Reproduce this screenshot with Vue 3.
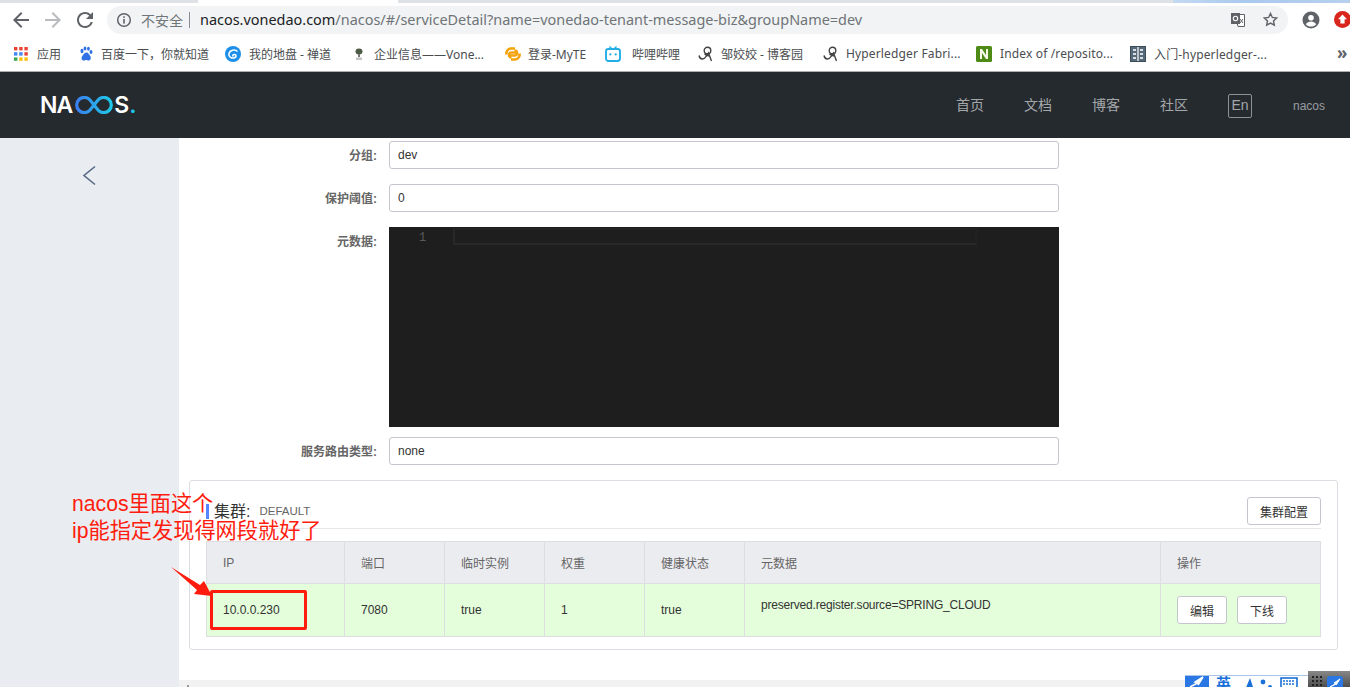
<template>
  <div class="page">
    <!-- browser chrome -->
    <div class="tabstrip">
      <div class="tab-off first"></div>
      <div class="tab-on"></div>
      <div class="tab-off rest"></div>
      <div class="tab-blue"></div>
    </div>
    <div class="toolbar">
      <svg class="nav-ico" viewBox="0 0 24 24" fill="#5f6368"><path d="M20 11H7.83l5.59-5.59L12 4l-8 8 8 8 1.41-1.41L7.83 13H20v-2z" /></svg>
      <svg class="nav-ico" viewBox="0 0 24 24" fill="#b8babd"><path d="M4 11h12.17l-5.59-5.59L12 4l8 8-8 8-1.41-1.41L16.17 13H4v-2z" /></svg>
      <svg class="nav-ico" viewBox="0 0 24 24" fill="#5f6368"><path d="M17.65 6.35A7.958 7.958 0 0 0 12 4c-4.42 0-7.99 3.58-7.99 8s3.57 8 7.99 8c3.73 0 6.84-2.55 7.73-6h-2.08A5.99 5.99 0 0 1 12 18c-3.31 0-6-2.69-6-6s2.69-6 6-6c1.66 0 3.14.69 4.22 1.78L13 11h7V4l-2.35 2.35z" /></svg>
      <div class="omnibox">
        <svg class="info" viewBox="0 0 16 16">
          <circle cx="8" cy="8" r="6.3" fill="none" stroke="#5f6368" stroke-width="1.5" />
          <rect x="7.2" y="7" width="1.6" height="4.6" fill="#5f6368" />
          <rect x="7.2" y="4.3" width="1.6" height="1.6" fill="#5f6368" />
        </svg>
        <span class="insecure">不安全</span>
        <span class="sep"></span>
        <span class="url"><b>nacos.vonedao.com</b>/nacos/#/serviceDetail?name=vonedao-tenant-message-biz&amp;groupName=dev</span>
        <svg class="translate" viewBox="0 0 16 16">
          <path d="M5 2.5h9.5v12H8z" fill="#fff" stroke="#5f6368" stroke-width="1" />
          <rect x="1" y="1" width="9" height="11" fill="#5f6368" />
          <circle cx="5.5" cy="6.5" r="2.2" fill="none" stroke="#fff" stroke-width="1.1" />
          <path d="M10 7l3 4M13 7l-3 4" stroke="#5f6368" stroke-width="1" />
        </svg>
        <svg class="star" viewBox="0 0 24 24" fill="none" stroke="#5f6368" stroke-width="2"><path d="M12 3.5l2.6 5.6 6.1.7-4.5 4.2 1.2 6-5.4-3-5.4 3 1.2-6-4.5-4.2 6.1-.7z" /></svg>
      </div>
      <svg class="profile" viewBox="0 0 18 18">
        <circle cx="9" cy="9" r="8.5" fill="#5f6368" />
        <circle cx="9" cy="6.8" r="2.8" fill="#fff" />
        <path d="M3.8 13.2c1.2-2 3.2-2.8 5.2-2.8s4 .8 5.2 2.8c-1.2 1.5-3.1 2.4-5.2 2.4s-4-.9-5.2-2.4z" fill="#fff" />
      </svg>
      <svg class="ext" viewBox="0 0 17 17">
        <circle cx="8.5" cy="8.5" r="8.5" fill="#d9261c" />
        <path d="M8.5 3.5l4.5 4.8h-2.4v4.2H6.4V8.3H4z" fill="#fff" />
      </svg>
    </div>
    <div class="bookmarks">
      <div v-for="b in bookmarks" :key="b.text" class="bm" :class="{ latin: b.latin }" :style="{ width: b.w + 'px' }">
        <svg v-if="b.icon === 'apps'" class="bm-ico apps" viewBox="0 0 14 14">
          <rect v-for="c in appCells" :key="c.x + '-' + c.y" :x="c.x" :y="c.y" width="3.4" height="3.4" :fill="c.fill" />
        </svg>
        <svg v-else-if="b.icon === 'paw'" class="bm-ico tight" viewBox="0 0 16 16" fill="#3072e6">
          <ellipse cx="4" cy="5" rx="1.5" ry="2.2" />
          <ellipse cx="7" cy="2.6" rx="1.4" ry="2" />
          <ellipse cx="10.4" cy="2.8" rx="1.4" ry="2" />
          <ellipse cx="13" cy="6" rx="1.5" ry="2" />
          <path d="M8.5 6.5c2 0 2.5 2 3.6 3.2 1.2 1.4.9 4.8-1.6 4.8-1 0-1.3-.5-2.2-.5s-1.4.5-2.4.5c-2.5 0-2.9-3-1.6-4.6 1.2-1.3 2-3.4 4.2-3.4z" />
        </svg>
        <svg v-else-if="b.icon === 'swirl'" class="bm-ico" viewBox="0 0 16 16">
          <circle cx="8" cy="8" r="8" fill="#1d8fe8" />
          <path d="M12.5 5.5C10 3 5 3.8 4 7.5c-.8 3.3 3 5.6 6 4 1.5-.8 1.4-2.8-.3-3-1.6-.2-2.5 1-1.5 2" fill="none" stroke="#fff" stroke-width="1.5" />
        </svg>
        <svg v-else-if="b.icon === 'plant'" class="bm-ico small" viewBox="0 0 14 16">
          <ellipse cx="7" cy="5.5" rx="3.5" ry="3" fill="#4d5a45" />
          <rect x="6" y="8" width="2" height="3" fill="#777" />
          <rect x="4" y="11.5" width="6" height="2.5" fill="#c4c4c4" />
        </svg>
        <svg v-else-if="b.icon === 'link'" class="bm-ico wide" viewBox="0 0 18 16" fill="none" stroke="#f5a30c" stroke-width="2.6">
          <path d="M12.5 6.5H7.5a2.5 2.5 0 0 0 0 5M11 2.5H6.5a5 5 0 0 0-4 6" />
          <path d="M5.5 9.5h5a2.5 2.5 0 0 0 0-5M7 13.5h4.5a5 5 0 0 0 4-6" />
        </svg>
        <svg v-else-if="b.icon === 'tv'" class="bm-ico roomy" viewBox="0 0 16 16">
          <path d="M4.5 0.5l2.5 2.5M11.5 0.5L9 3" stroke="#23ade5" stroke-width="1.4" />
          <rect x="1" y="3" width="14" height="12" rx="2.4" fill="none" stroke="#23ade5" stroke-width="1.9" />
          <circle cx="5.3" cy="8.4" r="1.1" fill="#23ade5" />
          <circle cx="10.7" cy="8.4" r="1.1" fill="#23ade5" />
        </svg>
        <svg v-else-if="b.icon === 'blog'" class="bm-ico tight" viewBox="0 0 16 16" fill="none" stroke="#444" stroke-width="1.4">
          <circle cx="9.5" cy="4.5" r="3.3" />
          <path d="M1 9.5c1 4.5 5 4.5 7 1l2.5-3.5 3 8M6.5 8l4.5 2" />
        </svg>
        <svg v-else-if="b.icon === 'nexus'" class="bm-ico" viewBox="0 0 16 16">
          <rect width="16" height="16" rx="1.5" fill="#4d8a16" />
          <path d="M4 13V3h2l4 6V3h2v10h-2L6 7v6z" fill="#f2f7e8" />
        </svg>
        <svg v-else-if="b.icon === 'book'" class="bm-ico" viewBox="0 0 16 16">
          <rect x="0.5" y="0.5" width="15" height="15" fill="#566a7a" stroke="#3e4c57" />
          <rect x="7.4" y="1" width="1.2" height="14" fill="#fff" />
          <rect x="3" y="3" width="3" height="2" fill="#d8dee3" />
          <rect x="3" y="7" width="3" height="2" fill="#d8dee3" />
          <rect x="3" y="11" width="3" height="2" fill="#d8dee3" />
          <rect x="10" y="3" width="3" height="2" fill="#d8dee3" />
          <rect x="10" y="7" width="3" height="2" fill="#d8dee3" />
          <rect x="10" y="11" width="3" height="2" fill="#d8dee3" />
        </svg>
        <span class="bm-text">{{ b.text }}</span>
      </div>
      <span class="bm-more">»</span>
    </div>

    <!-- nacos header -->
    <header class="topbar">
      <div class="logo">
        <span>NA</span>
        <svg class="logo-loop" width="40" height="18" viewBox="0 0 40 18" fill="none" stroke-width="3.2">
          <defs>
            <linearGradient id="loop" x1="0" x2="1" y1="0" y2="0">
              <stop offset="0" stop-color="#3a80f0" />
              <stop offset="1" stop-color="#1fc8e8" />
            </linearGradient>
          </defs>
          <path d="M16 4A7.6 7.6 0 1 0 16 14L24 4A7.6 7.6 0 1 1 24 14z" stroke="url(#loop)" />
        </svg>
        <span>S</span>
        <span class="logo-dot">.</span>
      </div>
      <nav class="topnav">
        <a v-for="n in navItems" :key="n">{{ n }}</a>
        <span class="lang">En</span>
        <span class="user">nacos</span>
      </nav>
    </header>

    <div class="body">
      <aside class="side">
        <svg class="back" width="16" height="21" viewBox="0 0 16 21" fill="none" stroke="#566a85" stroke-width="1.6"><path d="M14 1.5L3 10.5l11 9" /></svg>
      </aside>
      <main class="main">
        <div class="content">
          <div class="form-row gap15">
            <label>分组:</label>
            <div class="input">dev</div>
          </div>
          <div class="form-row gap15">
            <label>保护阈值:</label>
            <div class="input">0</div>
          </div>
          <div class="form-row gap10">
            <label class="top">元数据:</label>
            <div class="editor">
              <span class="lineno">1</span>
              <div class="curline"></div>
            </div>
          </div>
          <div class="form-row">
            <label>服务路由类型:</label>
            <div class="input">none</div>
          </div>

          <section class="card">
            <div class="card-head">
              <div class="card-title"><i class="bar"></i><span class="t1">集群:</span><span class="t2">DEFAULT</span></div>
              <button class="btn wide-btn">集群配置</button>
            </div>
            <table class="tbl">
              <colgroup>
                <col v-for="(w, i) in colWidths" :key="i" :style="{ width: w + 'px' }" />
              </colgroup>
              <thead>
                <tr><th v-for="h in headers" :key="h">{{ h }}</th></tr>
              </thead>
              <tbody>
                <tr>
                  <td>10.0.0.230</td>
                  <td>7080</td>
                  <td>true</td>
                  <td>1</td>
                  <td>true</td>
                  <td class="meta">preserved.register.source=SPRING_CLOUD</td>
                  <td><div class="ops"><button class="btn">编辑</button><button class="btn">下线</button></div></td>
                </tr>
              </tbody>
            </table>
          </section>
        </div>
        <div class="foot"><i class="foot-mark"></i></div>
      </main>
    </div>

    <!-- red annotation drawn on the screenshot -->
    <div class="note">nacos里面这个<br />ip能指定发现得网段就好了</div>
    <div class="redbox"></div>
    <svg class="arrow" width="50" height="36" viewBox="0 0 50 36">
      <polygon points="1,1 30,19 34,15 42,30 24,28 27,24" fill="#ff1c0e" />
    </svg>

    <!-- IME bar at the bottom edge -->
    <div class="ime">
      <div class="ime-logo">
        <svg width="24" height="12" viewBox="0 0 24 12"><path d="M5 11l8-4-3-1 8-5-5 8 1-3z" fill="#fff" stroke="#fff" stroke-width="1.5" /></svg>
      </div>
      <span class="ime-en">英</span>
      <svg class="ime-moon" width="34" height="12" viewBox="0 0 34 12" fill="#1a6fd8">
        <path d="M6 0l4 12H1z" />
        <circle cx="19" cy="4" r="2.4" />
        <circle cx="26" cy="9" r="2" />
      </svg>
      <svg class="ime-kbd" width="18" height="12" viewBox="0 0 18 12">
        <rect x="1" y="1" width="16" height="12" fill="none" stroke="#1a6fd8" stroke-width="1.6" />
        <path d="M3 4h12M3 7h12" stroke="#1a6fd8" stroke-width="1.6" stroke-dasharray="2 1" />
      </svg>
      <div class="ime-dark">
        <svg width="12" height="12" viewBox="0 0 12 12" fill="#222">
          <rect v-for="c in imeDots" :key="c.x + '-' + c.y" :x="c.x" :y="c.y" width="2" height="2" />
        </svg>
        <div class="ime-mini">
          <svg width="14" height="10" viewBox="0 0 14 10"><path d="M2 9l6-3-2-1 6-4-4 6 1-2z" fill="#fff" stroke="#fff" /></svg>
        </div>
      </div>
    </div>
  </div>
</template>

<script setup>
const bookmarks = [
  { icon: 'apps', text: '应用', w: 64 },
  { icon: 'paw', text: '百度一下，你就知道', w: 147 },
  { icon: 'swirl', text: '我的地盘 - 禅道', w: 127 },
  { icon: 'plant', text: '企业信息——Vone...', w: 152 },
  { icon: 'link', text: '登录-MyTE', w: 101 },
  { icon: 'tv', text: '哔哩哔哩', w: 93 },
  { icon: 'blog', text: '邹姣姣 - 博客园', w: 125 },
  { icon: 'blog', text: 'Hyperledger Fabri...', w: 153, latin: true },
  { icon: 'nexus', text: 'Index of /reposito...', w: 154, latin: true },
  { icon: 'book', text: '入门-hyperledger-...', w: 154, latin: true }
]

const appColors = ['#ea4335', '#ea4335', '#ea4335', '#4285f4', '#4285f4', '#ea4335', '#34a853', '#fbbc05', '#fbbc05']
const appCells = appColors.map((fill, i) => ({ x: (i % 3) * 5.2, y: Math.floor(i / 3) * 5.2, fill }))

const imeDots = []
for (let y = 0; y < 3; y++) {
  for (let x = 0; x < 3; x++) imeDots.push({ x: x * 4, y: y * 4 })
}

const navItems = ['首页', '文档', '博客', '社区']
const headers = ['IP', '端口', '临时实例', '权重', '健康状态', '元数据', '操作']
const colWidths = [138, 100, 100, 100, 100, 416, 160]
</script>

<style>
html, body {
  margin: 0;
  overflow: hidden;
}
</style>

<style scoped>
.page {
  position: relative;
  width: 1350px;
  height: 687px;
  overflow: hidden;
  display: flex;
  flex-direction: column;
  background: #fff;
  color: #333;
  font-family: "Liberation Sans", "Noto Sans CJK SC", sans-serif;
  font-size: 12px;
}

.tabstrip {
  display: flex;
  height: 3px;
  flex: none;
}
.tab-off { background: #dee1e6; }
.tab-off.first { width: 198px; }
.tab-on { width: 200px; background: #fff; }
.tab-off.rest { width: 775px; }
.tab-blue { flex: 1; background: linear-gradient(90deg, #c3d9f2, #a9c9ee 40%, #b7d0ee); }

.toolbar {
  display: flex;
  align-items: center;
  height: 33px;
  flex: none;
  padding-left: 9px;
  background: #fff;
}
.nav-ico {
  width: 24px;
  height: 24px;
  margin-right: 8px;
  flex: none;
}
.omnibox {
  display: flex;
  align-items: center;
  flex: none;
  width: 1181px;
  height: 28px;
  margin-left: 2px;
  border-radius: 14px;
  background: #f1f3f4;
  font-family: "Noto Sans", "Noto Sans CJK SC", sans-serif;
  font-size: 14px;
  color: #777b80;
  white-space: nowrap;
}
.info {
  width: 16px;
  height: 16px;
  margin-left: 9px;
}
.insecure {
  margin-left: 9px;
  color: #70757a;
}
.sep {
  width: 1px;
  height: 16px;
  margin: 0 9px 0 6px;
  background: #8a8d91;
}
.url {
  flex: 1;
  margin-left: 1px;
  color: #6f7478;
  font-size: 14.45px;
}
.url b {
  font-weight: 400;
  color: #202124;
}
.translate {
  width: 16px;
  height: 16px;
  margin-right: 16px;
}
.star {
  width: 17px;
  height: 17px;
  margin-right: 9px;
}
.profile {
  width: 18px;
  height: 18px;
  margin-left: 14px;
  flex: none;
}
.ext {
  width: 17px;
  height: 17px;
  margin-left: 14px;
  flex: none;
}

.bookmarks {
  display: flex;
  align-items: center;
  height: 35px;
  flex: none;
  padding-left: 14px;
  border-bottom: 1px solid #aeaeae;
  background: #fff;
  font-family: "Noto Sans", "Noto Sans CJK SC", sans-serif;
  color: #4a4d50;
  white-space: nowrap;
}
.bm {
  display: flex;
  align-items: center;
  flex: none;
}
.bm.latin {
  letter-spacing: 0.15px;
}
.bm-ico {
  width: 16px;
  height: 16px;
  margin-right: 8px;
  flex: none;
}
.bm-ico.apps {
  width: 14px;
  height: 14px;
  margin-right: 9px;
}
.bm-ico.tight {
  margin-right: 7px;
}
.bm-ico.small {
  width: 14px;
}
.bm-ico.wide {
  width: 18px;
  margin-right: 6px;
}
.bm-ico.roomy {
  margin-right: 11px;
}
.bm-more {
  position: absolute;
  left: 1337px;
  top: 41px;
  font-size: 17px;
  font-weight: 700;
  color: #5f6368;
}

.topbar {
  display: flex;
  align-items: center;
  justify-content: space-between;
  height: 66px;
  flex: none;
  padding: 0 25px 0 40px;
  background: #252a2f;
}
.logo {
  display: flex;
  align-items: center;
  font-family: "Inter", "Liberation Sans", sans-serif;
  font-size: 23px;
  font-weight: 600;
  letter-spacing: -1px;
  color: #fff;
  line-height: 1;
}
.logo-loop {
  margin: 0 0 0 2px;
}
.logo-dot {
  margin-left: 1px;
  color: #1fc8e8;
}
.topnav {
  display: flex;
  align-items: center;
  color: #a4a7aa;
  font-size: 14px;
}
.topnav a {
  margin: 0 40px 2px 0;
}
.lang {
  box-sizing: border-box;
  width: 24px;
  height: 24px;
  border: 1px solid #8f9295;
  border-radius: 2px;
  text-align: center;
  line-height: 20px;
  margin: 2px 41px 0 0;
}
.user {
  margin-top: 2px;
  font-size: 12px;
  color: #9a9da0;
}

.body {
  display: flex;
  flex: 1;
  min-height: 0;
}
.side {
  width: 179px;
  flex: none;
  padding: 27px 0 0 81px;
  box-sizing: border-box;
  background: #e9ecf1;
}
.back {
  display: block;
}
.main {
  flex: 1;
  display: flex;
  flex-direction: column;
  min-width: 0;
}
.content {
  flex: 1;
  padding: 3px 12px 0 10px;
  background: #fff;
}
.foot {
  position: relative;
  height: 7px;
  flex: none;
  background: #f2f2f2;
}
.foot-mark {
  position: absolute;
  left: 8px;
  top: 5px;
  width: 2px;
  height: 2px;
  background: #999;
}

.form-row {
  display: flex;
  align-items: center;
}
.form-row.gap15 { margin-bottom: 15px; }
.form-row.gap10 { margin-bottom: 10px; align-items: flex-start; }
.form-row label {
  flex: none;
  width: 188px;
  margin-right: 12px;
  padding-bottom: 2px;
  text-align: right;
  font-weight: 700;
  color: #666;
}
.form-row label.top {
  padding-top: 5px;
}
.input {
  box-sizing: border-box;
  width: 670px;
  height: 28px;
  padding: 0 8px;
  border: 1px solid #c4c6cf;
  border-radius: 3px;
  line-height: 26px;
  color: #333;
}
.editor {
  position: relative;
  width: 670px;
  height: 200px;
  background: #1e1e1e;
}
.lineno {
  position: absolute;
  left: 30px;
  top: 4px;
  color: #5a5a5a;
  font-family: "Liberation Mono", monospace;
  font-size: 12px;
}
.curline {
  position: absolute;
  left: 64px;
  top: 1px;
  width: 524px;
  height: 17px;
  box-sizing: border-box;
  border: 2px solid #282828;
  border-top-color: #222;
  border-right-color: #222;
}

.card {
  box-sizing: border-box;
  width: 1149px;
  height: 170px;
  margin-top: 15px;
  padding: 16px 16px 0;
  border: 1px solid #dcdee3;
  border-radius: 3px;
}
.card-head {
  display: flex;
  align-items: center;
  justify-content: space-between;
  padding-bottom: 3px;
  border-bottom: 1px solid #e6e7eb;
  margin-bottom: 12px;
}
.card-title {
  display: flex;
  align-items: center;
  height: 28px;
}
.bar {
  width: 3px;
  height: 15px;
  margin-right: 5px;
  background: #5584ff;
}
.t1 {
  margin: -2px -4px 0 0;
  font-size: 16px;
  color: #333;
}
.t2 {
  margin-left: 13px;
  font-size: 11.5px;
  color: #666;
}
.btn {
  box-sizing: border-box;
  width: 50px;
  height: 28px;
  padding: 0;
  border: 1px solid #c4c6cf;
  border-radius: 3px;
  background: #fff;
  color: #333;
  font: inherit;
}
.btn.wide-btn {
  width: 74px;
}
.tbl {
  width: 1114px;
  table-layout: fixed;
  border-collapse: collapse;
  border: 1px solid #dcdee3;
}
.tbl th, .tbl td {
  box-sizing: border-box;
  border: 1px solid #dcdee3;
  padding: 0 16px;
  text-align: left;
  font-weight: 400;
}
.tbl th {
  height: 42px;
  background: #ebecf0;
  color: #666;
}
.tbl td {
  height: 53px;
  background: #e4fdda;
  color: #333;
}
.tbl td.meta {
  padding-bottom: 10px;
  letter-spacing: -0.2px;
}
.ops {
  display: flex;
  gap: 10px;
}

.note {
  position: absolute;
  left: 72px;
  top: 490px;
  color: #ff1c0e;
  font-size: 21.2px;
  line-height: 27px;
  white-space: nowrap;
}
.redbox {
  position: absolute;
  left: 210px;
  top: 590px;
  box-sizing: border-box;
  width: 97px;
  height: 40px;
  border: 3px solid #ff1c0e;
  border-radius: 2px;
}
.arrow {
  position: absolute;
  left: 170px;
  top: 566px;
}

.ime {
  position: absolute;
  left: 1185px;
  top: 675px;
  width: 165px;
  height: 12px;
  display: flex;
  align-items: flex-start;
  background: #fff;
  border-top: 1px solid #a9c4ea;
  box-sizing: border-box;
}
.ime-logo {
  width: 24px;
  height: 12px;
  background: #2b78e4;
  flex: none;
}
.ime-en {
  margin-left: 7px;
  color: #1a6fd8;
  font-size: 15px;
  font-weight: 700;
  line-height: 15px;
}
.ime-moon {
  margin: 2px 0 0 13px;
}
.ime-kbd {
  margin: 1px 0 0 2px;
}
.ime-dark {
  position: absolute;
  left: 123px;
  top: -5px;
  width: 42px;
  height: 17px;
  display: flex;
  align-items: flex-start;
  gap: 3px;
  padding: 5px 0 0 4px;
  box-sizing: border-box;
  background: linear-gradient(#888, #4a4a4a);
}
.ime-mini {
  width: 16px;
  height: 12px;
  border-radius: 3px 3px 0 0;
  background: #2b78e4;
  display: flex;
  justify-content: center;
  padding-top: 2px;
  box-sizing: border-box;
}
</style>
